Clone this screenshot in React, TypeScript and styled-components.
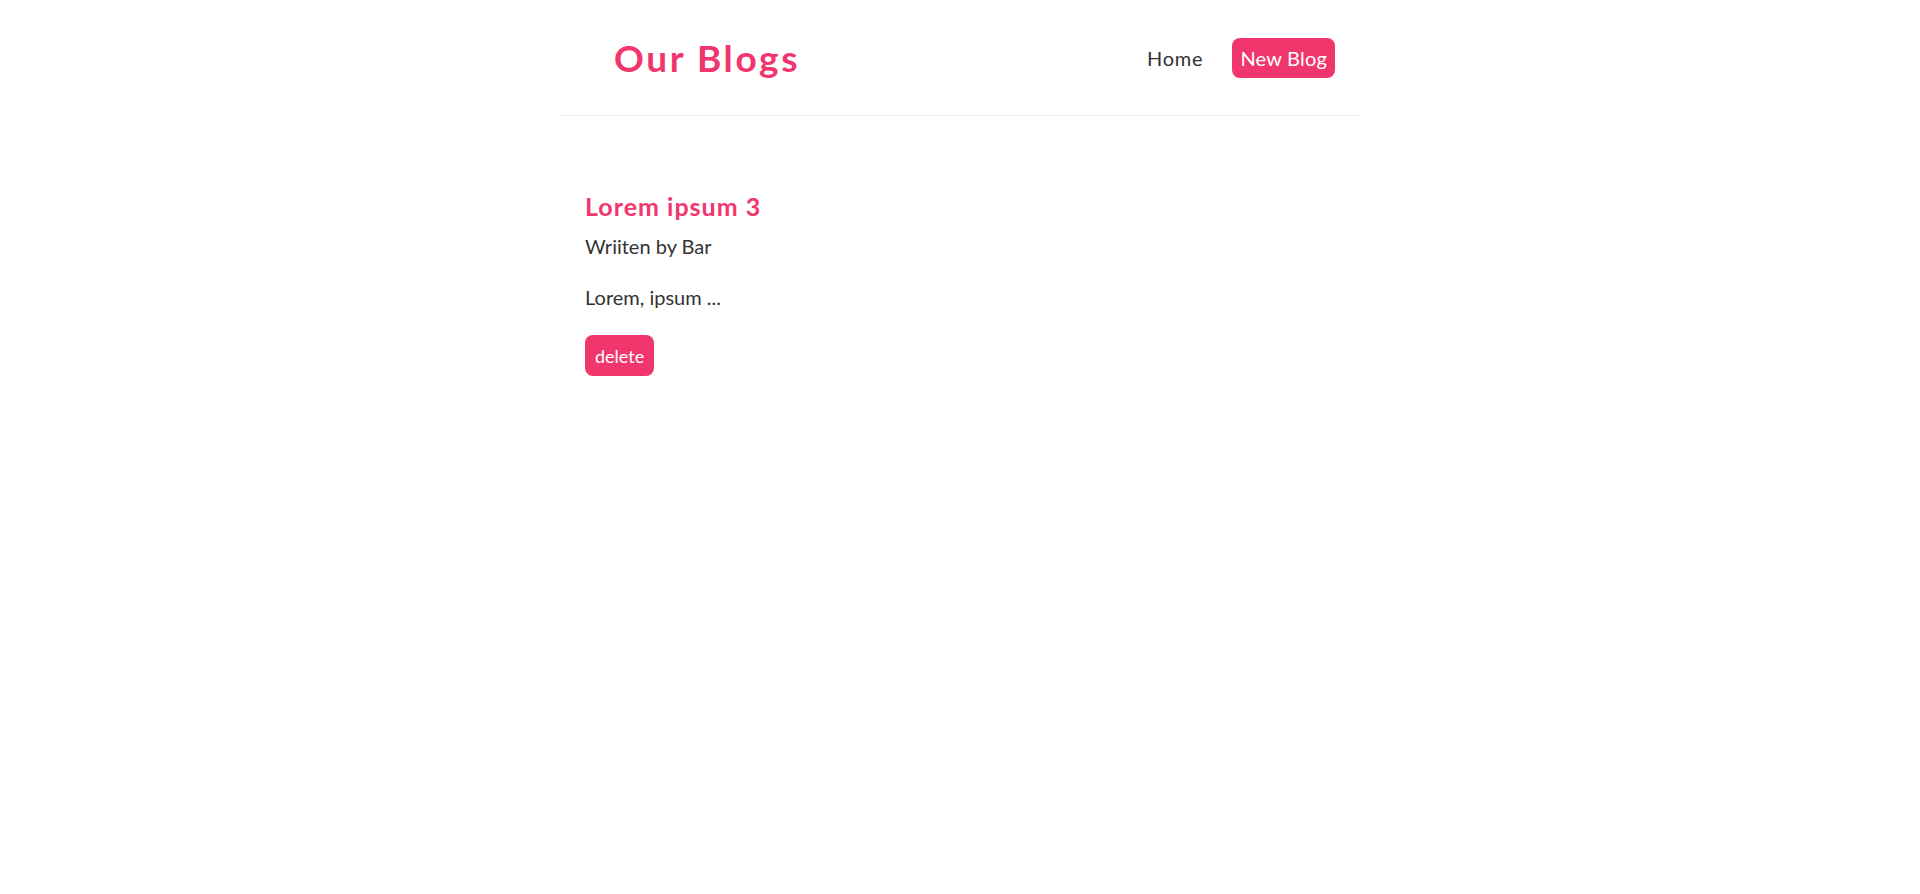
import styled, { createGlobalStyle } from "styled-components";

const GlobalStyle = createGlobalStyle`
  * {
    margin: 0;
    box-sizing: border-box;
  }
  body {
    background: #fff;
    font-family: "Lato", "Open Sans", sans-serif;
    color: #333;
  }
`;

const Navbar = styled.nav`
  max-width: 800px;
  height: 116px;
  margin: 0 auto;
  padding: 0 25px 0 54px;
  display: flex;
  align-items: center;
  border-bottom: 1px solid #f2f2f2;
`;

const Brand = styled.h1`
  font-size: 37px;
  font-weight: 700;
  color: #f1356d;
  letter-spacing: 2.6px;
`;

const Links = styled.div`
  margin-left: auto;
  display: flex;
  align-items: center;
  gap: 21px;
`;

const NavLink = styled.a<{ $primary?: boolean }>`
  text-decoration: none;
  font-size: 20px;
  line-height: 24px;
  letter-spacing: ${(p) => (p.$primary ? "0.2px" : "0.8px")};
  padding: 8px;
  border-radius: 8px;
  color: ${(p) => (p.$primary ? "#fff" : "#333")};
  background: ${(p) => (p.$primary ? "#f1356d" : "transparent")};
  cursor: pointer;
`;

const Content = styled.main`
  max-width: 800px;
  margin: 0 auto;
  padding: 75px 25px 0;
`;

const Preview = styled.article`
  display: flex;
  flex-direction: column;
  align-items: flex-start;
`;

const Title = styled.h2`
  font-size: 25px;
  font-weight: 700;
  color: #f1356d;
  line-height: 30px;
  letter-spacing: 1px;
`;

const Author = styled.p`
  font-size: 20px;
  line-height: 24px;
  margin-top: 13px;
`;

const Body = styled.p`
  font-size: 20px;
  line-height: 24px;
  margin-top: 27px;
`;

const DeleteButton = styled.button`
  margin-top: 26px;
  border: none;
  border-radius: 8px;
  background: #f1356d;
  color: #fff;
  font-family: inherit;
  font-size: 18px;
  height: 41px;
  padding: 0 10px;
  cursor: pointer;
`;

export default function App() {
  return (
    <>
      <GlobalStyle />
      <Navbar>
        <Brand>Our Blogs</Brand>
        <Links>
          <NavLink href="#">Home</NavLink>
          <NavLink href="#" $primary>
            New Blog
          </NavLink>
        </Links>
      </Navbar>
      <Content>
        <Preview>
          <Title>Lorem ipsum 3</Title>
          <Author>Wriiten by Bar</Author>
          <Body>Lorem, ipsum ...</Body>
          <DeleteButton>delete</DeleteButton>
        </Preview>
      </Content>
    </>
  );
}
